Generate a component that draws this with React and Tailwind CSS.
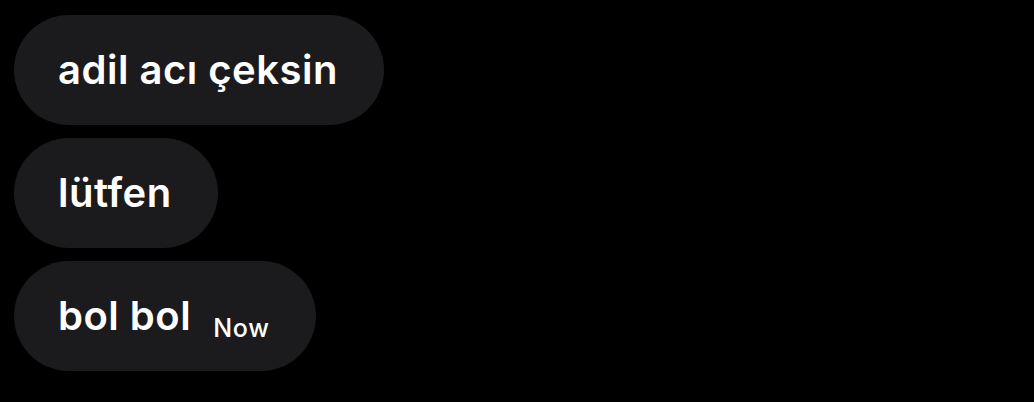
import React from "react";

const messages = ["adil acı çeksin", "lütfen", "bol bol"];

function Bubble({ text, time }) {
  return (
    <div className="h-[110px] rounded-full bg-[#1b1b1d] pl-[44px] pr-[46px] flex items-center self-start">
      <div className="flex items-baseline">
        <span className="text-[40px] font-semibold text-white tracking-[0.5px]">{text}</span>
        {time && (
          <span className="ml-[22px] text-[25px] font-medium text-white tracking-[0.8px] translate-y-[7px]">{time}</span>
        )}
      </div>
    </div>
  );
}

export default function App() {
  return (
    <div
      className="w-[1034px] h-[402px] bg-black flex flex-col gap-[13px] pt-[15px] pl-[14px] overflow-hidden"
      style={{ fontFamily: "Inter, 'Noto Sans', sans-serif" }}
    >
      {messages.map((m, i) => (
        <Bubble key={i} text={m} time={i === messages.length - 1 ? "Now" : null} />
      ))}
    </div>
  );
}
